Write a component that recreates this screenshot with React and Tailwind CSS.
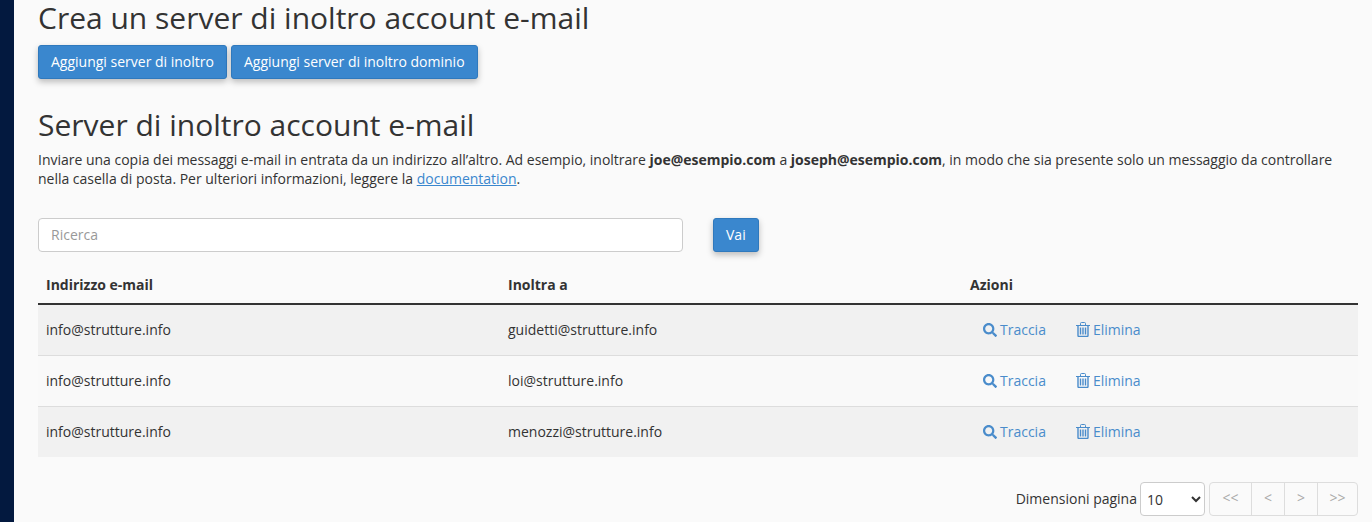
import React from 'react';
import { FaSearch } from 'react-icons/fa';

const rows = [
  { from: 'info@strutture.info', to: 'guidetti@strutture.info' },
  { from: 'info@strutture.info', to: 'loi@strutture.info' },
  { from: 'info@strutture.info', to: 'menozzi@strutture.info' },
];

const pages = [
  { label: '<<', cls: 'w-[41px]' },
  { label: '<', cls: 'w-[33px] border-l border-[#ddd]' },
  { label: '>', cls: 'w-[33px] border-l border-[#ddd]' },
  { label: '>>', cls: 'w-[40px] border-l border-[#ddd]' },
];

const btn = 'h-[34px] rounded-[3px] border border-[#2f79bd] bg-[#3a87ce] px-3 text-sm text-white shadow-[0_3px_6px_rgba(0,0,0,0.25)]';

// cestino stile fa-trash-o
const TrashIcon = () => (
  <svg viewBox="0 0 14 15" className="ml-[30px] mr-[3px] h-[15px] w-[14px]" fill="none" stroke="currentColor">
    <path d="M0 3.5h14" />
    <path d="M4.5 3V1.5q0-1 1-1h3q1 0 1 1V3" />
    <path d="M2 3.5v10q0 1 1 1h8q1 0 1-1v-10" strokeWidth="1.4" />
    <path d="M4.5 5.5v7M7 5.5v7M9.5 5.5v7" strokeWidth="1.4" />
  </svg>
);

const App = () => {
  return (
    <div className="flex h-[522px] w-full overflow-hidden bg-[#fafafa] font-['Open_Sans',sans-serif] text-sm text-[#293a4a]">
      <div className="w-[14px] shrink-0 bg-[#03193f]" />

      <div className="flex-1 pl-6 pr-[14px]">
        <h1 className="text-[30px] leading-[35px] text-[#333]">Crea un server di inoltro account e-mail</h1>
        <div className="mt-[10px] flex gap-[4px]">
          <button className={btn}>Aggiungi server di inoltro</button>
          <button className={btn}>Aggiungi server di inoltro dominio</button>
        </div>

        <h2 className="mt-[27px] text-[30px] leading-[37px] text-[#333]">Server di inoltro account e-mail</h2>
        <p className="mt-[7px] text-[14px] leading-[19px] tracking-[-0.01px] text-[#333]">
          Inviare una copia dei messaggi e-mail in entrata da un indirizzo all’altro. Ad esempio, inoltrare <b>joe@esempio.com</b> a <b>joseph@esempio.com</b>, in modo che sia presente solo un messaggio da controllare nella casella di posta. Per ulteriori informazioni, leggere la <a className="text-[#3a87ce] underline">documentation</a>.
        </p>

        <div className="mt-[30px] flex items-center gap-[30px]">
          <input
            placeholder="Ricerca"
            className="h-[34px] w-[645px] rounded-[4px] border border-[#ccc] bg-white px-3 pb-[2px] text-sm placeholder:text-[#999]"
          />
          <button className={btn}>Vai</button>
        </div>

        {/* tabella */}
        <table className="mt-[16px] w-full table-fixed border-collapse text-[#333]">
          <thead>
            <tr className="h-[36px] border-b-2 border-[#333] text-left">
              <th className="w-[35%] px-2 pb-[2px] font-bold">Indirizzo e-mail</th>
              <th className="w-[35%] px-2 pb-[2px] font-bold">Inoltra a</th>
              <th className="px-2 pb-[2px] font-bold">Azioni</th>
            </tr>
          </thead>
          <tbody>
            {rows.map((r, i) => (
              <tr key={i} className={`h-[51px] border-[#ddd] ${i < 2 ? 'border-b' : ''} ${i % 2 === 0 ? 'bg-[#f1f1f1]' : 'bg-[#f9f9f9]'}`}>
                <td className="px-2">{r.from}</td>
                <td className="px-2">{r.to}</td>
                <td className="px-2">
                  <div className="flex items-center pl-[13px] text-[#4a8ccb]">
                    <FaSearch className="mr-[3px] h-[14px] w-[14px]" />
                    <span>Traccia</span>
                    <TrashIcon />
                    <span>Elimina</span>
                  </div>
                </td>
              </tr>
            ))}
          </tbody>
        </table>

        <div className="mt-[25px] flex items-center justify-end">
          <span className="mr-[3px] text-[#333]">Dimensioni pagina</span>
          <select className="h-[34px] w-[65px] rounded-[4px] border border-[#ccc] bg-white pl-[2px] text-sm text-[#333]">
            <option>10</option>
          </select>
          <div className="ml-[4px] flex h-[34px] rounded-[4px] border border-[#ddd] text-[#aaa]">
            {pages.map((p) => (
              <span key={p.label} className={`flex items-center justify-center pb-[2px] ${p.cls}`}>{p.label}</span>
            ))}
          </div>
        </div>
      </div>
    </div>
  );
};

export default App;
